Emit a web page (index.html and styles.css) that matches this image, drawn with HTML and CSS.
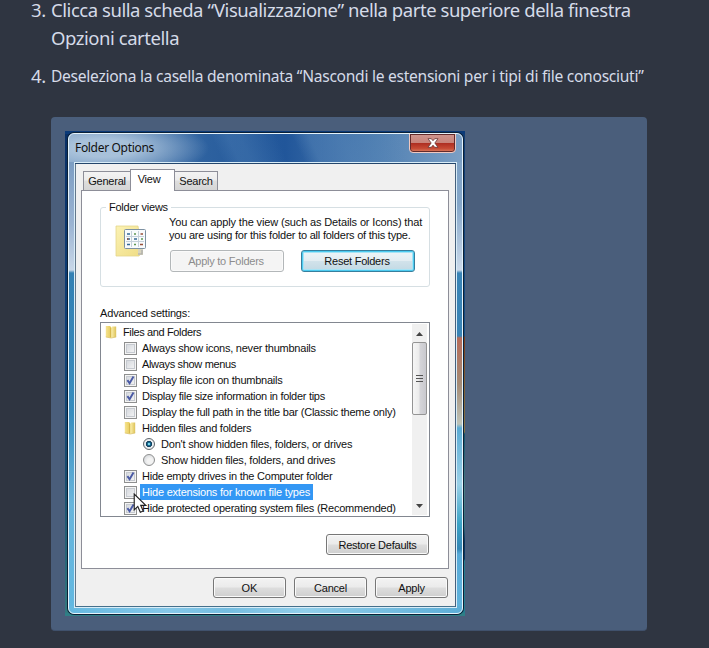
FILE: index.html
```
<!DOCTYPE html>
<html lang="it">
<head>
<meta charset="utf-8">
<title>Opzioni cartella</title>
<link rel="stylesheet" href="styles.css">
</head>
<body>
<svg class="defs" width="0" height="0" aria-hidden="true">
  <defs>
    <linearGradient id="gold" x1="0" x2="1"><stop offset="0" stop-color="#f5e391"/><stop offset=".45" stop-color="#e9ce60"/><stop offset=".55" stop-color="#fbeea8"/><stop offset="1" stop-color="#dcc158"/></linearGradient>
    <linearGradient id="paper" x1="0" y1="0" x2="1" y2="1"><stop offset="0" stop-color="#fbf2b4"/><stop offset="1" stop-color="#efdc83"/></linearGradient>
    <symbol id="folder" viewBox="0 0 12 14"><path d="M.8 1h4.400l1 1.500 1-1h4V12l-5 1-5.400-1z" fill="url(#gold)"/><path d="M5.200 2l1 1.500V12.500l-1-.5z" fill="#d2b34a"/><path d="M.8 12l5.400 1 5-1" fill="none" stroke="#d8bf68" stroke-width=".7"/></symbol>
    <symbol id="tick" viewBox="0 0 11 11"><path d="M2.4 5.1l2.2 3.2L8.5 1.6" fill="none" stroke="#4a5aa5" stroke-width="1.9"/></symbol>
  </defs>
</svg>
<ol class="steps" start="3">
  <li><span class="num">3.</span><p>Clicca sulla scheda “Visualizzazione” nella parte superiore della finestra Opzioni cartella</p></li>
  <li><span class="num">4.</span><p class="small">Deseleziona la casella denominata “Nascondi le estensioni per i tipi di file conosciuti”</p></li>
</ol>
<div class="card">
  <div class="desktop">
    <div class="window">
      <div class="titlebar">
        <span class="title">Folder Options</span>
        <span class="close"><svg width="12" height="10" viewBox="0 0 12 10"><path d="M1 .7h3.3L6 2.7 7.7.7H11L7.8 5 11 9.300H7.700L6 7.200 4.300 9.300H1L4.200 5z" fill="#fff" stroke="#633" stroke-width=".8"/></svg></span>
      </div>
      <div class="client">
        <div class="tabs">
          <span class="tab general">General</span><span class="tab view">View</span><span class="tab search">Search</span>
        </div>
        <div class="page">
          <fieldset class="group">
            <legend>Folder views</legend>
            <svg class="views" width="32" height="34" viewBox="0 0 32 34">
              <path d="M1 2h22l4 26-3 4H1z" fill="url(#paper)" stroke="#e5d58a" stroke-width=".8"/>
              <path d="M23 24h5v7h-5z" fill="#d8d4bd"/><path d="M27 26v4h-4" fill="none" stroke="#aaa" stroke-width="1.200"/>
              <rect x="9.500" y="5.500" width="21" height="19" rx="1" fill="#f8fbfd" stroke="#7d91a2"/>
              <path d="M16.500 7v16M23.500 7v16M11 12.500h18M11 17.500h18" stroke="#c5d1da"/>
              <path d="M12 10h3M12 15h3M12 20.500h3M19 15h3" stroke="#346996" stroke-width="1.500"/>
              <path d="M19 10h2M26 15h2M19 20.500h2" stroke="#5d9853" stroke-width="1.500"/>
              <path d="M25.500 10h2.500M25 20.500h3M12 15h1.500" stroke="#98503a" stroke-width="1.700"/>
            </svg>
            <div class="about">
              <p><span class="l1">You can apply the view (such as Details or Icons) that</span><br><span class="l2">you are using for this folder to all folders of this type.</span></p>
              <div class="pair"><span class="btn off">Apply to Folders</span><span class="btn focus">Reset Folders</span></div>
            </div>
          </fieldset>
          <div class="label">Advanced settings:</div>
          <div class="tree">
            <div class="rows">
              <div class="row d0"><svg class="fold"><use href="#folder"/></svg><span class="t5">Files and Folders</span></div>
              <div class="row d1"><i class="box"></i><span>Always show icons, never thumbnails</span></div>
              <div class="row d1"><i class="box"></i><span class="t4">Always show menus</span></div>
              <div class="row d1"><i class="box"><svg><use href="#tick"/></svg></i><span>Display file icon on thumbnails</span></div>
              <div class="row d1"><i class="box"><svg><use href="#tick"/></svg></i><span class="t3">Display file size information in folder tips</span></div>
              <div class="row d1"><i class="box"></i><span>Display the full path in the title bar (Classic theme only)</span></div>
              <div class="row d1"><svg class="fold"><use href="#folder"/></svg><span>Hidden files and folders</span></div>
              <div class="row d2"><i class="radio on"></i><span class="t2">Don't show hidden files, folders, or drives</span></div>
              <div class="row d2"><i class="radio"></i><span class="t2">Show hidden files, folders, and drives</span></div>
              <div class="row d1"><i class="box"><svg><use href="#tick"/></svg></i><span>Hide empty drives in the Computer folder</span></div>
              <div class="row d1"><i class="box"></i><span class="picked t2">Hide extensions for known file types</span></div>
              <div class="row d1"><i class="box"><svg><use href="#tick"/></svg></i><span>Hide protected operating system files (Recommended)</span></div>
            </div>
            <div class="scroll">
              <span class="arrow"><svg width="7" height="4" viewBox="0 0 7 4"><path d="M0 4l3.500-4L7 4z" fill="#444"/></svg></span>
              <span class="thumb"><i></i><i></i><i></i></span>
              <span class="arrow down"><svg width="7" height="4" viewBox="0 0 7 4"><path d="M0 0h7L3.500 4z" fill="#444"/></svg></span>
            </div>
            <svg class="cursor" width="14" height="21" viewBox="0 0 13 20"><path d="M1 1v15l3.400-3.200 2.400 5.600 2.800-1.200-2.400-5.400H12z" fill="#fff" stroke="#222" stroke-width="1.100"/></svg>
          </div>
          <span class="btn restore">Restore Defaults</span>
        </div>
        <div class="actions"><span class="btn ok">OK</span><span class="btn">Cancel</span><span class="btn">Apply</span></div>
      </div>
    </div>
  </div>
</div>
</body>
</html>
```
FILE: styles.css
```
* { box-sizing: border-box; }
body { margin: 0; height: 648px; overflow: hidden; background: #2f3541; color: #d5dbe8; font-family: "Noto Sans", sans-serif; }
.defs { position: absolute; }
p { margin: 0; }

.steps { display: flow-root; list-style: none; margin: 0; padding: 0 0 0 31px; height: 117px; }
.steps li { display: flex; height: 66px; margin-top: -4px; font-size: 18.5px; line-height: 28px; letter-spacing: -.45px; }
.steps li + li { margin-top: 0; }
.num { width: 20px; flex: none; }
.steps p { width: 610px; }
.steps .small { font-size: 15.6px; letter-spacing: -.28px; white-space: nowrap; }

.card { width: 596px; height: 514px; margin-left: 51px; padding: 14px; border-radius: 4px; background: #4a5e7b; border-bottom: 1px solid #40516c; }

.desktop {
  width: 400px; height: 485px; padding: 2px 2px 2px 3px;
  background:
    linear-gradient(#0b3a78 0 3px, transparent 3px),
    linear-gradient(#2f7f86, #2f7f86) 0 100% / 100% 3px no-repeat,
    linear-gradient(#123c72 0, #174d83 205px, #743c1e 206px, #7d6038 260px, #857248 301px, #13556f 303px, #4b8087 360px, #346f7d 395px, #093560 410px, #093a69 428px, #247c90 430px) 100% 0 / 4px 100% no-repeat,
    linear-gradient(#082f66, #0c3f78 200px, #174d70 350px, #337a80);
}
.window {
  height: 481px; padding: 0 5px; border: 1px solid #e5f3fb; border-radius: 6px; overflow: hidden;
  box-shadow: 0 0 0 1px #0a2036;
  background:
    radial-gradient(ellipse 105px 30px at 35px 14px, #b2c9dfe0 0 30%, #7699c200 100%) 0 0 / 100% 28px no-repeat,
    linear-gradient(65deg, #5d87b700 0 38%, #4c7eb560 42% 45%, #2b62a300 54% 58%, #5f8dbd60 62% 70%, #7499c100 85%) 0 0 / 100% 28px no-repeat,
    linear-gradient(90deg, #6d93bd, #2d619f 35%, #21569a 55%, #4e7eb1 78%, #7b9fc4) 0 0 / 100% 28px no-repeat,
    linear-gradient(90deg, #66b9e0, #86c8e8 25%, #75bde0 40%, #92cfea 60%, #5daed7) 0 100% / 100% 7px no-repeat,
    linear-gradient(#7b9fc4, #84a6c8 70px, #cbd9e9 136px, #3984b6 139px, #3984b6 202px, #b66b58 204px, #a48b75 250px, #bec3b8 290px, #5babd4 294px, #9ad0e7 350px, #3ba3c6 390px, #3486b5 415px, #58aad8 420px, #60b3dc) 100% 0 / 7px 100% no-repeat,
    linear-gradient(#6e93bc, #9bb4d2 90px, #c8d7e8 136px, #3380b3 139px, #368dbf 280px, #67b5dc 370px, #62b8e1) 0 0 / 7px 100% no-repeat;
}
.titlebar { display: flex; justify-content: space-between; height: 28px; padding: 0 1px; }
.title { color: #111; font-size: 12px; line-height: 27px; letter-spacing: -.32px; }
.close { display: grid; place-items: center; width: 47px; height: 20px; margin-top: -1px; border: 1px solid #f0c8c0; border-radius: 0 0 4px 4px; box-shadow: inset 0 0 0 1px #632b2c; background: linear-gradient(#ce9690, #c9847a 48%, #ad2c20 50%, #c64a34 80%, #db8062); }

.client {
  height: 446px; padding: 6px 7px 0 6px; border: 1px solid #d9edf8; background: #f0f0f0;
  box-shadow: inset 0 1px #24466c, inset -1px 0 #45607c, inset 1px 0 #62778b, inset 0 -1px #45708c;
  color: #111; font: 11px/13px "Liberation Sans", sans-serif; letter-spacing: -.24px;
}
.tabs { display: flex; align-items: flex-end; height: 21px; padding-left: 2px; }
.tab { height: 19px; border: 1px solid #8d8e98; border-bottom: 0; text-align: center; line-height: 18px; background: linear-gradient(#f3f3f3, #ececec 45%, #dedede 50%, #d5d5d5); }
.tab.general { width: 47px; border-right: 0; }
.tab.view { position: relative; width: 45px; height: 22px; margin-bottom: -1px; padding-right: 7px; background: #fff; }
.tab.search { width: 43px; border-left: 0; }
.page { height: 379px; padding: 11px 17px 0 18px; background: #fff; border: 1px solid #8d8e98; }

.group { position: relative; display: flex; width: 330px; height: 85px; margin: 0; padding: 0; border: 1px solid #d6dfe3; border-radius: 3px; min-width: 0; }
.group legend { height: 10px; margin-left: 5px; padding: 0 3px; line-height: 10px; }
.views { flex: none; margin: 12px 0 0 14px; }
.about { padding: 4px 0 0 22px; white-space: nowrap; }
.l1 { letter-spacing: -.14px; }
.l2 { letter-spacing: -.22px; }
.pair { display: flex; gap: 17px; margin: 8px 0 0 1px; }
.btn { display: block; width: 73px; height: 21px; border: 1px solid #777; border-radius: 3px; box-shadow: inset 0 0 0 1px #fafafa; text-align: center; line-height: 20px; background: linear-gradient(#f3f3f3, #ebebeb 48%, #dddddd 52%, #cfcfcf); }
.pair .btn { width: 114px; height: 22px; padding-right: 2px; }
.btn.off { color: #8c8c8c; border-color: #b3b7b9; background: #f4f4f4; }
.btn.focus { border-color: #377f9e; box-shadow: inset 0 0 0 1px #4ccbf0, inset 0 0 0 2px #a7e3f5; background: linear-gradient(#eef5f8, #e3edf2 48%, #d1e2ea 52%, #c2d9e4); }
.label { height: 17px; margin: 20px 0 -2px; line-height: 13px; letter-spacing: -.16px; }

.tree { position: relative; display: flex; justify-content: space-between; width: 330px; height: 195px; padding: 1px 2px 1px 0; border: 1px solid #828790; }
.rows { width: 311px; overflow: hidden; }
.row { display: flex; align-items: center; height: 16px; white-space: nowrap; }
.row > span { height: 16px; line-height: 17px; }
.d0 { padding-left: 4px; }
.d1 { padding-left: 23px; }
.d2 { padding-left: 42px; }
.fold { width: 12px; height: 14px; margin-right: 6px; }
.box { width: 13px; height: 13px; margin-right: 5px; border: 1px solid #8e8f8f; box-shadow: inset 0 0 0 1px #f4f4f4, inset 0 0 0 2px #c6cad0; background: linear-gradient(135deg, #cfd3d9, #f8f8f8); }
.box svg { display: block; width: 11px; height: 11px; }
.radio { width: 12px; height: 12px; margin-right: 6px; border: 1px solid #8e8f8f; border-radius: 50%; background: radial-gradient(circle at 60% 60%, #f3f3f3 30%, #c9cdd2); }
.radio.on { border-color: #60666b; background: radial-gradient(circle at 50% 50%, #8be5f6 0 8%, #176d94 22%, #0b3452 40%, #e9edf0 48%); }
.t2 { letter-spacing: -.21px; }
.t3 { letter-spacing: -.29px; }
.t4 { letter-spacing: -.33px; }
.t5 { letter-spacing: -.37px; }
.row > .picked { margin-left: -2px; padding: 0 3px 0 2px; color: #fff; background: #3397f4; }
.scroll { display: flex; flex-direction: column; width: 15px; height: 191px; background: #f0f0f0; }
.arrow { display: grid; place-items: center; height: 17px; padding-top: 2px; }
.down { margin-top: auto; padding: 0 0 1px; }
.thumb { display: flex; flex-direction: column; align-items: center; justify-content: center; gap: 2px; height: 73px; margin-top: 1px; border: 1px solid #949494; border-radius: 2px; background: linear-gradient(90deg, #f6f6f6, #ebebeb 48%, #d5d5d9 52%, #c9c9ce); }
.thumb i { width: 7px; height: 1px; background: #555; }
.cursor { position: absolute; left: 32px; top: 170px; }
.restore { width: 103px; margin: 17px 0 0 226px; }
.actions { display: flex; justify-content: flex-end; gap: 8px; padding-top: 8px; margin-right: 1px; }
.ok { letter-spacing: 0; }
```
